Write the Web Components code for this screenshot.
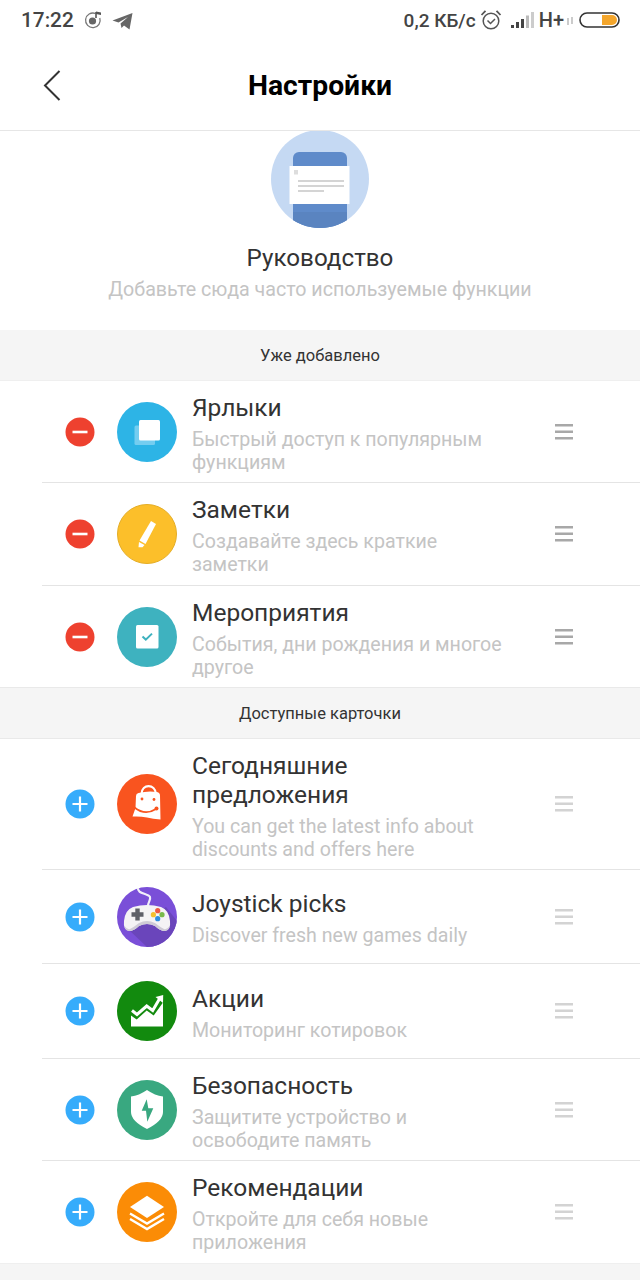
<!DOCTYPE html>
<html lang="ru">
<head>
<meta charset="utf-8">
<title>Настройки</title>
<style>
    html, body { margin: 0; padding: 0; background: #fff; }
    body { width: 640px; height: 1280px; overflow: hidden; font-family: Roboto, "Liberation Sans", sans-serif; }
    settings-page svg { display: block; }
</style>
</head>
<body>
<settings-page>
    <status-bar></status-bar>
    <app-header>Настройки</app-header>
    <guide-hero title-text="Руководство" sub="Добавьте сюда часто используемые функции"></guide-hero>

    <section-label size="51">Уже добавлено</section-label>
    <card-row kind="remove" name="Ярлыки" height="102" desc="Быстрый доступ к популярным функциям">
        <svg slot="icon" width="60" height="60" viewBox="0 0 60 60">
            <circle cx="30" cy="30" r="30" fill="#2db4e6"/>
            <rect x="17.5" y="23.5" width="20.5" height="19.5" rx="1.5" fill="#74cdf0"/>
            <rect x="22" y="18" width="21" height="20.500" rx="1.5" fill="#fff"/>
        </svg>
    </card-row>
    <card-row kind="remove" name="Заметки" height="103" desc="Создавайте здесь краткие заметки">
        <svg slot="icon" width="60" height="60" viewBox="0 0 60 60">
            <circle cx="30" cy="30" r="29.5" fill="#fcbf2a" stroke="#e4ad26"/>
            <path d="M34 17 L39 20 L28.500 40 L22.500 36.500 Z" fill="#fff"/>
            <path d="M22 38 L27.500 41 L25.500 43.200 H21.500 Z" fill="#fff"/>
        </svg>
    </card-row>
    <card-row kind="remove" name="Мероприятия" height="101" last desc="События, дни рождения и многое другое">
        <svg slot="icon" width="60" height="60" viewBox="0 0 60 60">
            <circle cx="30" cy="30" r="30" fill="#3eb2bf"/>
            <rect x="19" y="18" width="22.500" height="23.500" rx="1.5" fill="#fff"/>
            <path d="M25.500 29.500 L28.800 32.600 L35 26.600" fill="none" stroke="#3eb2bf" stroke-width="2"/>
        </svg>
    </card-row>

    <section-label size="52" lined>Доступные карточки</section-label>
    <card-row kind="add" name="Сегодняшние предложения" height="131" desc="You can get the latest info about discounts and offers here">
        <svg slot="icon" width="60" height="60" viewBox="0 0 60 60">
            <circle cx="30" cy="30" r="30" fill="#f9541f"/>
            <path d="M24.500 20 C25 9.500 38 9.500 39 20" fill="none" stroke="#fff" stroke-width="2.200"/>
            <path d="M21.500 19 Q31 16.500 40 18 Q43 18.500 43 21.500 L43.500 45.500 Q36 45 30 43.500 Q23 42 15.500 42.500 L18.500 34 L19 22 Q19 19.500 21.500 19 Z" fill="#fff"/>
            <circle cx="25" cy="25" r="1.400" fill="#f9541f"/>
            <circle cx="37" cy="25.500" r="1.400" fill="#f9541f"/>
            <path d="M17.500 33.500 Q28 42 39 35" fill="none" stroke="#f9541f" stroke-width="1.800"/>
            <circle cx="39.500" cy="34.500" r="2" fill="#f9541f"/>
        </svg>
    </card-row>
    <card-row kind="add" name="Joystick picks" height="94" desc="Discover fresh new games daily">
        <svg slot="icon" width="60" height="60" viewBox="0 0 60 60">
            <defs><clipPath id="joy"><circle cx="30" cy="30" r="30"/></clipPath></defs>
            <circle cx="30" cy="30" r="30" fill="#7a4fd8"/>
            <path d="M12 43 L30 60 L60 60 L60 34 L49 20 Z" fill="#6a45bb" clip-path="url(#joy)"/>
            <path d="M21 1 C20 7 31 6 33 10 C34 13 31 15 31 19" fill="none" stroke="#f1eefa" stroke-width="2.200"/>
            <path d="M16 20 Q30 16 44 20 Q52 23 53 34 Q54 43 48 44 Q43 44 38 39 Q30 35 22 39 Q17 44 12 44 Q6 43 7 34 Q8 23 16 20 Z" fill="#f5f3f5"/>
            <path d="M7.500 39 Q8 43.500 12 44 Q17 44 22 39 Q30 35 38 39 Q43 44 48 44 Q52 43.500 52.700 39 Q50 43 47 42 Q43 40 38 36 Q30 32 22 36 Q17 40 13 42 Q10 43 7.500 39 Z" fill="#cfcbd6"/>
            <path d="M18.300 21.500 H22.700 V25.300 H26.500 V29.700 H22.700 V33.500 H18.300 V29.700 H14.500 V25.300 H18.300 Z" fill="#5f6068"/>
            <circle cx="40.700" cy="23.700" r="2.600" fill="#ef5a42"/>
            <circle cx="45" cy="27.700" r="2.600" fill="#79b94a"/>
            <circle cx="36.400" cy="27.700" r="2.600" fill="#f5bf2f"/>
            <circle cx="40.700" cy="31.700" r="2.600" fill="#2f8ee0"/>
        </svg>
    </card-row>
    <card-row kind="add" name="Акции" height="95" desc="Мониторинг котировок">
        <svg slot="icon" width="60" height="60" viewBox="0 0 60 60">
            <circle cx="30" cy="30" r="30" fill="#128a0e"/>
            <path d="M14 34.600 L19.700 38.500 L29.700 29.500 L36.700 34.500 L46 21.600 V45.600 H14 Z" fill="#fff"/>
            <path d="M15 29.500 L20 33.500 L29.700 25 L35.700 29.500 L43 17" fill="none" stroke="#fff" stroke-width="3"/>
            <path d="M38.500 16 L46.200 14 L46 22 Z" fill="#fff"/>
        </svg>
    </card-row>
    <card-row kind="add" name="Безопасность" height="102" desc="Защитите устройство и освободите память">
        <svg slot="icon" width="60" height="60" viewBox="0 0 60 60">
            <circle cx="30" cy="30" r="30" fill="#39a880"/>
            <path d="M30 10 Q38 15.500 46 16.500 V32 Q46 41 30 49 Q14 41 14 32 V16.500 Q22 15.500 30 10 Z" fill="#fff"/>
            <path d="M29.700 19.300 L24.700 30.700 H29 L30.300 41.700 L36.300 28.300 H31.300 Z" fill="#39a880"/>
        </svg>
    </card-row>
    <card-row kind="add" name="Рекомендации" height="102" last desc="Откройте для себя новые приложения">
        <svg slot="icon" width="60" height="60" viewBox="0 0 60 60">
            <circle cx="30" cy="30" r="30" fill="#fb8c06"/>
            <path d="M30 13.700 L47 25 L30 36 L13 25 Z" fill="#fff"/>
            <path d="M13 31.500 L30 41.500 L47 31.500" fill="none" stroke="#fff" stroke-width="2.400"/>
            <path d="M13 37 L30 47 L47 37" fill="none" stroke="#fff" stroke-width="2.400"/>
        </svg>
    </card-row>
    <page-foot></page-foot>
</settings-page>

<script>
class SettingsPage extends HTMLElement {
    constructor() {
        super();
        this.attachShadow({mode: "open"});
        this.shadowRoot.innerHTML = `
            <style>:host { display: flex; flex-direction: column; width: 640px; height: 1280px; background: #fff; }</style>
            <slot></slot>`;
    }
}

class StatusBar extends HTMLElement {
    constructor() {
        super();
        this.attachShadow({mode: "open"});
        this.shadowRoot.innerHTML = `
            <style>
                :host { display: flex; align-items: center; height: 40px; padding: 0 19px 0 21px; box-sizing: border-box; color: #444; font: 500 19px Roboto, sans-serif; }
                .side { display: flex; align-items: center; }
                .right { margin-left: auto; }
                .time { font-size: 20.800px; }
                svg { display: block; flex: none; }
            </style>
            <div class="side">
                <span class="time">17:22</span>
                <svg style="margin-left:9px" width="20" height="20" viewBox="0 0 20 20">
                    <path d="M12.500 3.500 A7.300 7.300 0 1 0 16.800 8" fill="none" stroke="#777" stroke-width="1.300"/>
                    <circle cx="9.500" cy="11" r="3.600" fill="#666"/>
                    <path d="M13 2 V8" stroke="#555" stroke-width="1.600"/>
                    <path d="M13 1.500 L18 2.500 V5 L13 4 Z" fill="#555"/>
                </svg>
                <svg style="margin-left:9px" width="21" height="19" viewBox="0 0 21 19">
                    <path d="M0.500 9.500 L20.500 2 L17.500 18.500 L12 14.500 L9.500 17 L8.500 12.500 L16 6 L6.500 11.500 Z" fill="#666"/>
                </svg>
            </div>
            <div class="side right">
                <span>0,2 КБ/с</span>
                <svg style="margin-left:4px" width="22" height="22" viewBox="0 0 22 22">
                    <circle cx="11" cy="12" r="7.800" fill="none" stroke="#555" stroke-width="1.500"/>
                    <path d="M7.500 11.500 L10.500 14.500 L15 10" fill="none" stroke="#555" stroke-width="1.500"/>
                    <path d="M1.500 6 L5.500 1.800 M20.500 6 L16.500 1.800" stroke="#555" stroke-width="1.800"/>
                </svg>
                <svg style="margin-left:9px" width="25" height="20" viewBox="0 0 25 20">
                    <rect x="0" y="15" width="3" height="3" fill="#444"/>
                    <rect x="5" y="12" width="3" height="6" fill="#444"/>
                    <rect x="10" y="9" width="3" height="9" fill="#444"/>
                    <rect x="15" y="5.500" width="3" height="12.500" fill="#bbb"/>
                    <rect x="20" y="2" width="3" height="16" fill="#ccc"/>
                </svg>
                <span style="margin-left:3px;font-size:20px">H+</span>
                <svg style="margin-left:1px" width="12" height="14" viewBox="0 0 12 14">
                    <path d="M3 5 V12 M7 4 V11" stroke="#aaa" stroke-width="1.200"/>
                </svg>
                <svg style="margin-left:2px" width="42" height="18" viewBox="0 0 42 18">
                    <rect x="1" y="2" width="39" height="14" rx="7" fill="none" stroke="#333" stroke-width="1.600"/>
                    <path d="M23 4 H33 A5 5 0 0 1 33 14 H23 Z" fill="#f4a62c"/>
                </svg>
            </div>`;
    }
}

class AppHeader extends HTMLElement {
    constructor() {
        super();
        this.attachShadow({mode: "open"});
        this.shadowRoot.innerHTML = `
            <style>
                :host { display: flex; align-items: center; justify-content: center; position: relative; height: 91px; box-sizing: border-box; border-bottom: 1px solid #e6e6e6; color: #000; font: 700 28.300px Roboto, sans-serif; }
                svg { position: absolute; left: 42px; top: 29px; display: block; }
            </style>
            <svg width="20" height="32" viewBox="0 0 20 32">
                <path d="M17.500 2 L3 16.500 L17.500 31" fill="none" stroke="#333" stroke-width="2"/>
            </svg>
            <slot></slot>`;
    }
}

class GuideHero extends HTMLElement {
    constructor() {
        super();
        this.attachShadow({mode: "open"});
        this.shadowRoot.innerHTML = `
            <style>
                :host { display: flex; flex-direction: column; align-items: center; height: 200px; box-sizing: border-box; margin-top: -1px; }
                svg { display: block; }
                h2 { margin: 14px 0 0; font: 400 24.200px/32px Roboto, sans-serif; color: #333; }
                p { margin: 3px 0 0; font: 400 19.650px/26px Roboto, sans-serif; color: #c4c4c4; }
            </style>
            <svg width="98" height="98" viewBox="0 0 98 98">
                <defs><clipPath id="disc"><circle cx="49" cy="49" r="49"/></clipPath></defs>
                <circle cx="49" cy="49" r="49" fill="#c5d9f3"/>
                <g clip-path="url(#disc)">
                    <rect x="22" y="22" width="54" height="80" rx="6" fill="#5f8bca"/>
                    <rect x="22" y="82" width="54" height="20" fill="#5a84c0"/>
                </g>
                <rect x="18.500" y="36" width="60" height="38" fill="#fff"/>
                <rect x="23" y="40" width="4" height="4.500" fill="#ddd"/>
                <rect x="27" y="50" width="46" height="2" fill="#d4d4d4"/>
                <rect x="27" y="55" width="46" height="2" fill="#d4d4d4"/>
                <rect x="27" y="60" width="26" height="2" fill="#d4d4d4"/>
            </svg>
            <h2></h2>
            <p></p>`;
    }

    connectedCallback() {
        this.shadowRoot.querySelector("h2").textContent = this.getAttribute("title-text");
        this.shadowRoot.querySelector("p").textContent = this.getAttribute("sub");
    }
}

class SectionLabel extends HTMLElement {
    constructor() {
        super();
        this.attachShadow({mode: "open"});
        this.shadowRoot.innerHTML = `
            <style>
                :host { display: flex; align-items: center; justify-content: center; box-sizing: border-box; background: #f5f5f5; color: #333; font: 400 16.500px Roboto, sans-serif; border-bottom: 1px solid #efefef; }
                :host([lined]) { border-top: 1px solid #e9e9e9; border-bottom-color: #e9e9e9; }
            </style>
            <slot></slot>`;
    }

    connectedCallback() {
        this.style.height = this.getAttribute("size") + "px";
    }
}

class CardRow extends HTMLElement {
    constructor() {
        super();
        this.attachShadow({mode: "open"});
        this.shadowRoot.innerHTML = `
            <style>
                :host { display: block; box-sizing: border-box; padding-left: 42px; }
                .row { display: flex; align-items: center; height: 100%; box-sizing: border-box; padding-left: 23px; border-bottom: 1px solid #e4e4e4; }
                :host([last]) .row { border-bottom: 0; }
                .toggle { flex: none; width: 30px; height: 30px; margin-right: 22px; display: block; }
                .pic { flex: none; width: 60px; height: 60px; margin-right: 15px; }
                .text { flex: none; width: 315px; padding-top: 3px; }
                .name { font: 400 24.500px/29px Roboto, sans-serif; color: #333; }
                .desc { margin-top: 6px; font: 400 19.600px/23px Roboto, sans-serif; color: #c4c4c4; }
                .grip { flex: none; width: 18px; height: 16px; margin-left: 48px; }
                :host([kind="add"]) .grip { opacity: .5; }
            </style>
            <svg class="toggle" viewBox="0 0 30 30"></svg>
            <div class="pic"><slot name="icon"></slot></div>
            <div class="text"><div class="name"></div><div class="desc"></div></div>
            <svg class="grip" viewBox="0 0 18 16">
                <rect y="0" width="18" height="2.500" fill="#a8a8a8"/>
                <rect y="6.500" width="18" height="2.500" fill="#a8a8a8"/>
                <rect y="13" width="18" height="2.500" fill="#a8a8a8"/>
            </svg>`;
    }

    connectedCallback() {
        // wrap everything after the style in the bordered row
        const root = this.shadowRoot;
        const row = document.createElement("div");
        row.className = "row";
        [...root.children].filter(el => el.tagName !== "STYLE").forEach(el => row.appendChild(el));
        root.appendChild(row);
        this.style.height = this.getAttribute("height") + "px";
        root.querySelector(".name").textContent = this.getAttribute("name");
        root.querySelector(".desc").textContent = this.getAttribute("desc");
        const add = this.getAttribute("kind") === "add";
        root.querySelector(".toggle").innerHTML = add
            ? `<circle cx="15" cy="15" r="14.500" fill="#36acfb"/><path d="M7.500 15 H22.500 M15 7.500 V22.500" stroke="#fff" stroke-width="2.200"/>`
            : `<circle cx="15" cy="15" r="14.500" fill="#ee412f"/><path d="M7.500 15 H22.500" stroke="#fff" stroke-width="2.600"/>`;
    }
}

class PageFoot extends HTMLElement {
    constructor() {
        super();
        this.attachShadow({mode: "open"});
        this.shadowRoot.innerHTML = `<style>:host { display: block; flex: 1; background: #f5f5f5; border-top: 1px solid #efefef; }</style>`;
    }
}

customElements.define("settings-page", SettingsPage);
customElements.define("status-bar", StatusBar);
customElements.define("app-header", AppHeader);
customElements.define("guide-hero", GuideHero);
customElements.define("section-label", SectionLabel);
customElements.define("card-row", CardRow);
customElements.define("page-foot", PageFoot);
</script>
</body>
</html>
